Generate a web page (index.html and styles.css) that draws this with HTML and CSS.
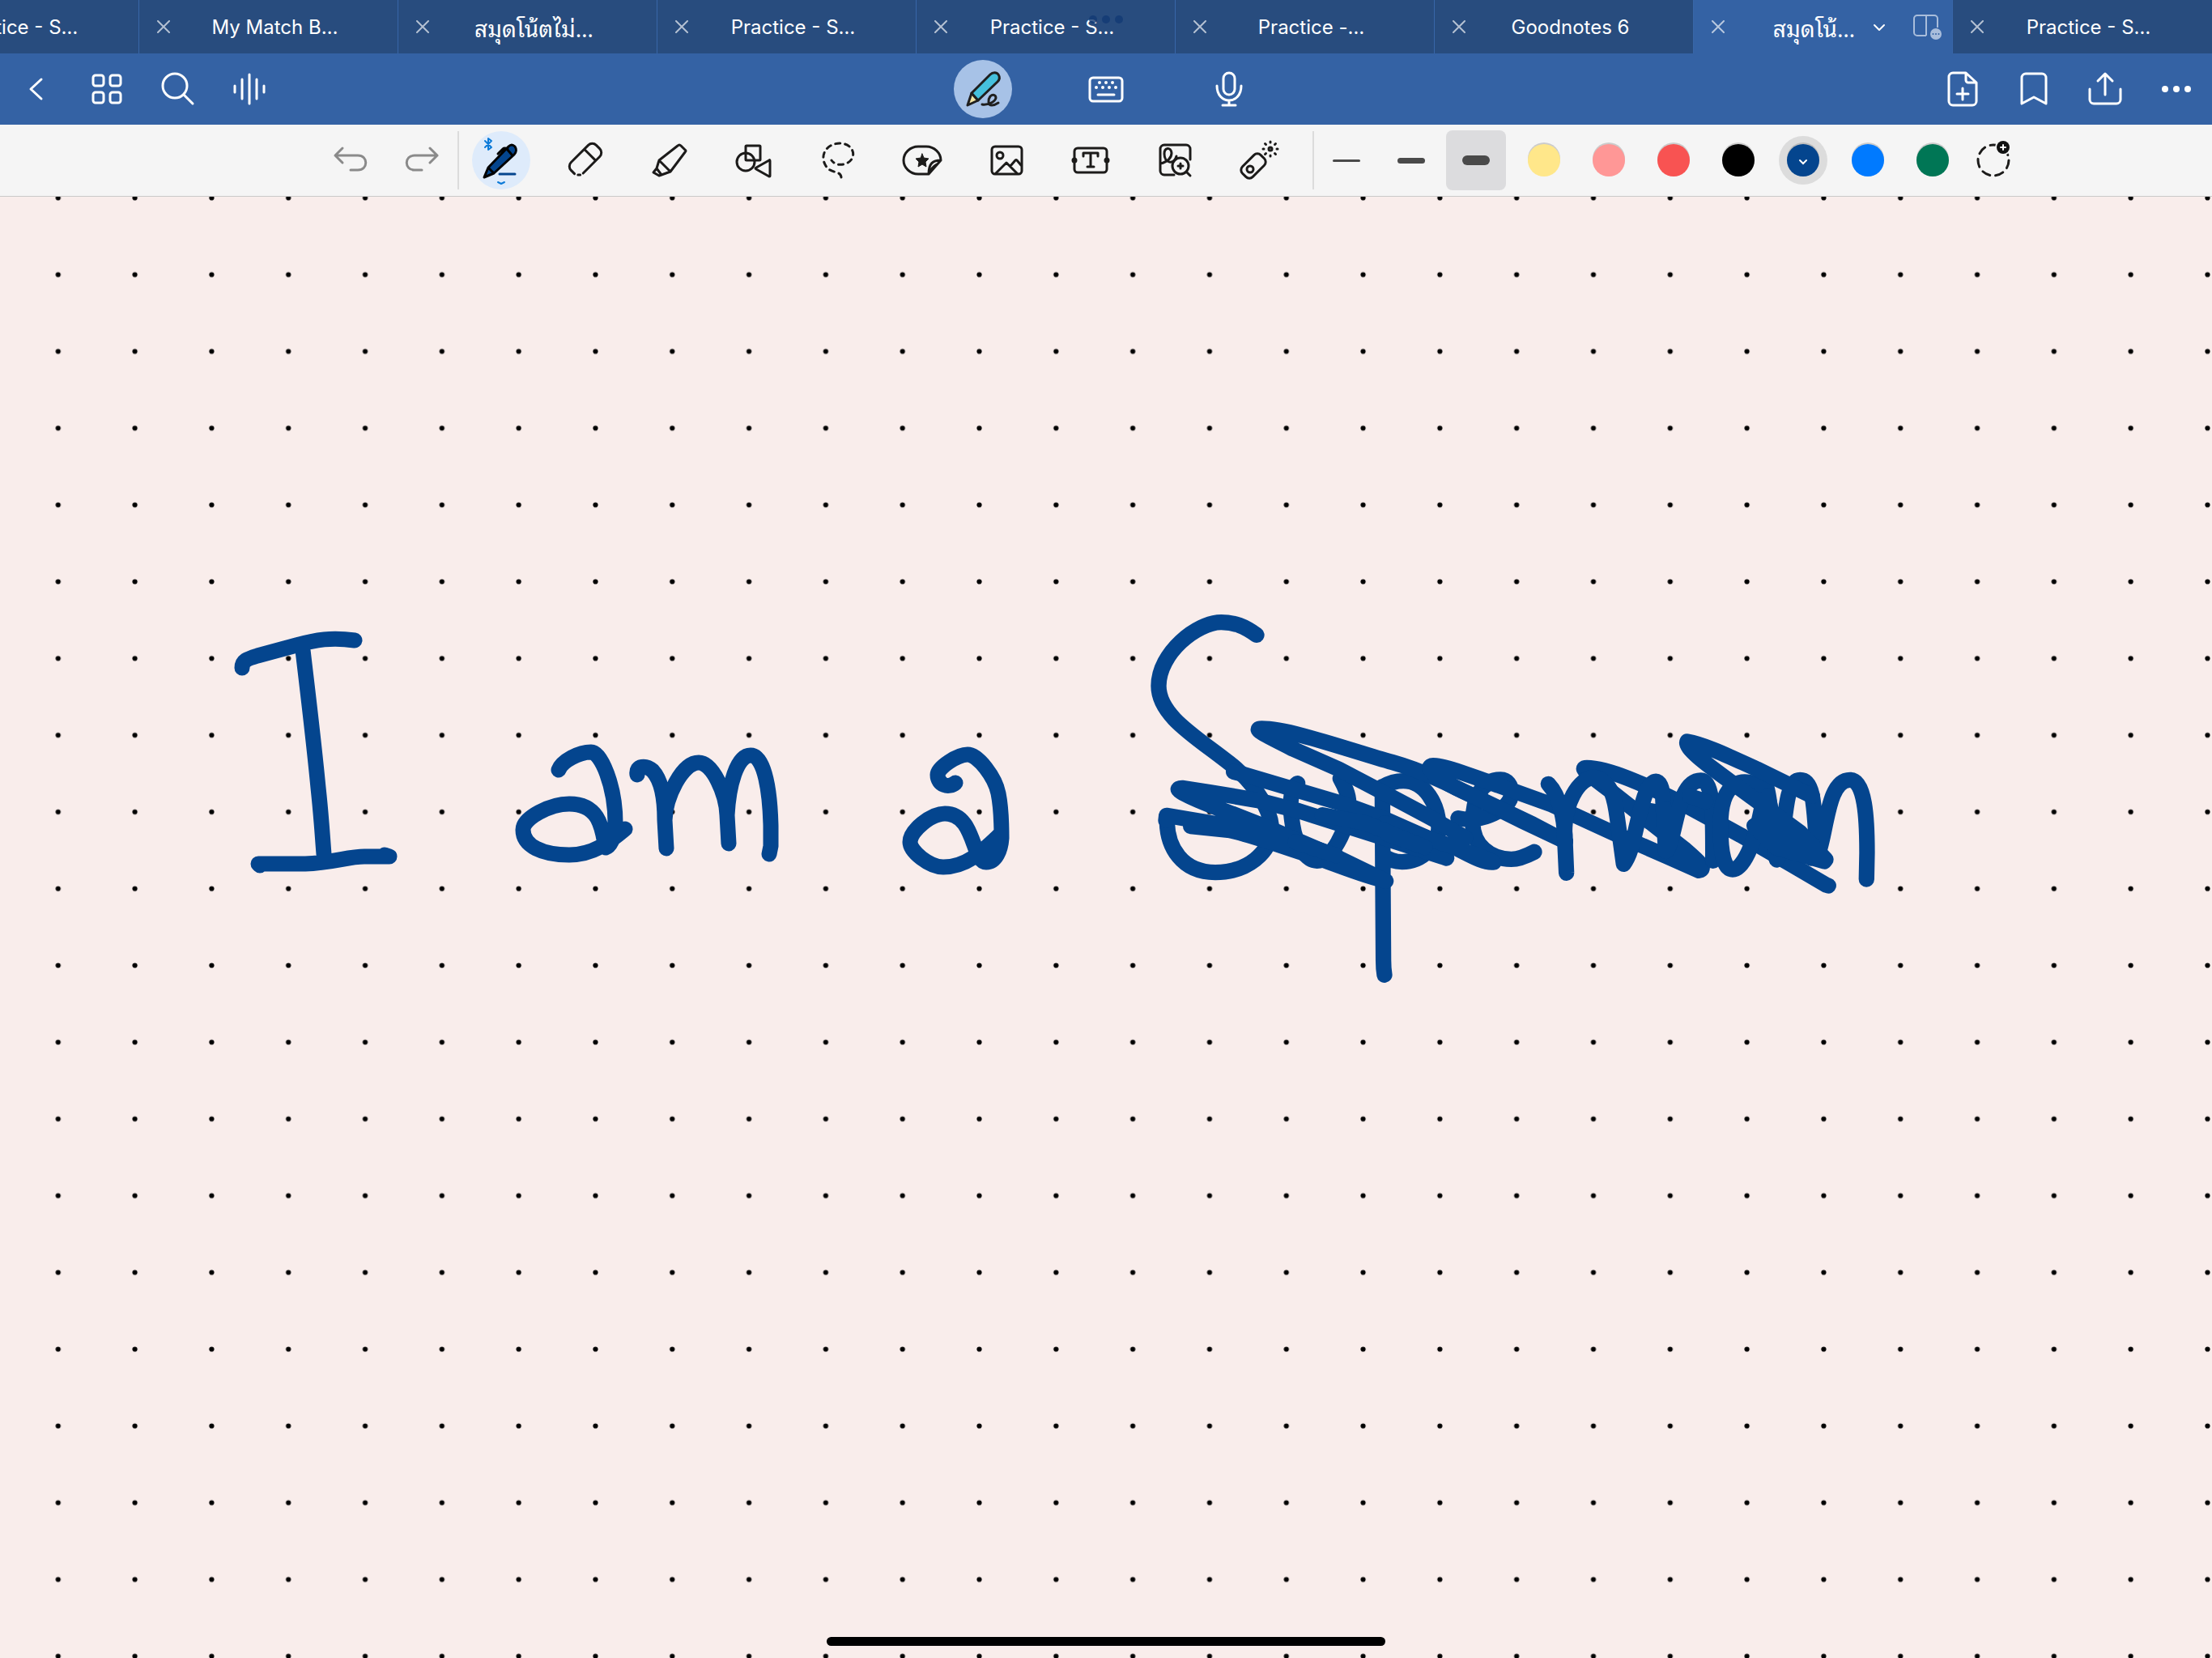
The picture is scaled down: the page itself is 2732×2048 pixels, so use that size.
FILE: index.html
```html
<!DOCTYPE html>
<html lang="en">
<head>
<meta charset="utf-8">
<meta name="viewport" content="width=device-width, initial-scale=1">
<title>Goodnotes</title>
<link rel="stylesheet" href="styles.css">
</head>
<body>
<svg class="defs" aria-hidden="true">
  <symbol id="close" viewBox="-10 -10 20 20"><path d="M-7 -7 7 7M7 -7-7 7"/></symbol>
</svg>

<nav class="tabs" aria-label="Open documents">
  <div class="tab"><button class="close" aria-label="Close"><svg><use href="#close"/></svg></button><button class="title">Practice - S…</button></div>
  <div class="tab"><button class="close" aria-label="Close"><svg><use href="#close"/></svg></button><button class="title">My Match B…</button></div>
  <div class="tab"><button class="close" aria-label="Close"><svg><use href="#close"/></svg></button><button class="title thai" lang="th">สมุดโน้ตไม่…</button></div>
  <div class="tab"><button class="close" aria-label="Close"><svg><use href="#close"/></svg></button><button class="title">Practice - S…</button></div>
  <div class="tab"><button class="close" aria-label="Close"><svg><use href="#close"/></svg></button><button class="title">Practice - S…</button></div>
  <div class="tab"><button class="close" aria-label="Close"><svg><use href="#close"/></svg></button><button class="title">Practice -…</button></div>
  <div class="tab"><button class="close" aria-label="Close"><svg><use href="#close"/></svg></button><button class="title">Goodnotes 6</button></div>
  <div class="tab active">
    <button class="close" aria-label="Close"><svg><use href="#close"/></svg></button>
    <button class="title thai" lang="th">สมุดโน้…</button>
    <button class="chevron" aria-label="Document menu"><svg viewBox="-10 -10 20 20"><path d="M-6 -2 0 4 6 -2"/></svg></button>
    <button class="split" aria-label="Split view"><svg viewBox="0 0 40 40"><path d="M20 31H9a4 4 0 0 1-4-4V10a4 4 0 0 1 4-4h21a4 4 0 0 1 4 4v11M20 6v25"/><circle class="badge" cx="32" cy="29" r="7"/><g class="badge-dots"><circle cx="28.500" cy="29" r="1"/><circle cx="32" cy="29" r="1"/><circle cx="35.500" cy="29" r="1"/></g></svg></button>
  </div>
  <div class="tab"><button class="close" aria-label="Close"><svg><use href="#close"/></svg></button><button class="title">Practice - S…</button></div>
  <div class="multitask" aria-hidden="true"><i></i><i></i><i></i></div>
</nav>

<header class="navbar">
  <div class="group">
    <button aria-label="Back"><svg class="icon" viewBox="-36 -36 72 72"><path d="M7 -12-6 0 7 12"/></svg></button>
    <button aria-label="Thumbnails"><svg class="icon" viewBox="-36 -36 72 72"><rect x="-17" y="-17" width="13" height="13" rx="3"/><rect x="4" y="-17" width="13" height="13" rx="3"/><rect x="-17" y="4" width="13" height="13" rx="3"/><rect x="4" y="4" width="13" height="13" rx="3"/></svg></button>
    <button aria-label="Search"><svg class="icon" viewBox="-36 -36 72 72"><circle cx="-4" cy="-4" r="15"/><path d="M7 7 18 18"/></svg></button>
    <button aria-label="Audio"><svg class="icon" viewBox="-36 -36 72 72"><path d="M-18 -4V4M-9 -12V12M0 -18V18M9 -12V12M18 -4V4"/></svg></button>
  </div>
  <div class="group modes">
    <button class="current" aria-label="Write"><svg class="icon ink-icon" viewBox="-36 -36 72 72"><path fill="#f3e5a4" d="M-14 5-19 20-6 14Z"/><path fill="#45c0dd" d="M-14 5 9 -18C12 -21 17 -21 19 -18C21 -15 21 -12 18 -9L-6 14Z"/><path d="M-1 19C6 20 15 16 16 11C16 7 12 6 9 9C6 13 6 20 11 20C14 20 16 19 19 17"/></svg></button>
    <button aria-label="Keyboard"><svg class="icon" viewBox="-36 -36 72 72"><rect x="-20" y="-14" width="40" height="29" rx="4"/><path d="M-10 7H10"/><path class="dots" d="M-8 -8h0M0 -8h0M8 -8h0M-12 -2h0M-4 -2h0M4 -2h0M12 -2h0"/></svg></button>
    <button aria-label="Record"><svg class="icon" viewBox="-36 -36 72 72"><rect x="-7" y="-20" width="14" height="27" rx="7"/><path d="M-15 -4C-15 20 15 20 15 -4M0 14V20M-8 20H8"/></svg></button>
  </div>
  <div class="group end">
    <button aria-label="Add page"><svg class="icon" viewBox="-36 -36 72 72"><path d="M4 -20H-12a5 5 0 0 0-5 5V15a5 5 0 0 0 5 5H12a5 5 0 0 0 5-5V-8ZM4 -20V-11a3 3 0 0 0 3 3H17M-7 6H7M0 -1V13"/></svg></button>
    <button aria-label="Bookmark"><svg class="icon" viewBox="-36 -36 72 72"><path d="M-15 18V-14a5 5 0 0 1 5-5H10a5 5 0 0 1 5 5V18L0 10Z"/></svg></button>
    <button aria-label="Share"><svg class="icon" viewBox="-36 -36 72 72"><path d="M-19 0V13a5 5 0 0 0 5 5H14a5 5 0 0 0 5-5V0M0 7V-18M-9 -10 0 -19 9 -10"/></svg></button>
    <button aria-label="More"><svg class="icon solid" viewBox="-36 -36 72 72"><circle cx="-14" r="4"/><circle r="4"/><circle cx="14" r="4"/></svg></button>
  </div>
</header>

<div class="toolbar" role="toolbar" aria-label="Tools">
  <div class="history">
    <button aria-label="Undo"><svg class="icon" viewBox="-36 -36 72 72"><path d="M-10 -15-19 -6-10 3M-19 -6H9C22 -6 22 12 9 12H0"/></svg></button>
    <button aria-label="Redo"><svg class="icon" viewBox="-36 -36 72 72"><path d="M10 -15 19 -6 10 3M19 -6H-9C-22 -6-22 12-9 12H0"/></svg></button>
  </div>
  <div class="tools">
    <button class="current" aria-label="Pen"><svg class="icon pen" viewBox="-36 -36 72 72"><path fill="#04458e" d="M-21 21-16 9 9 -17C12 -20 15 -19 17 -17C19 -14 19 -10 16 -7L-9 16ZM-16 9-9 16M7 -14 13 -7M-4 -8 2 -14C4 -16 6 -15 8 -14"/><path class="nib" d="M-2 17H17"/><path class="accent" d="M-4 27 0 29 4 27"/><path class="accent" d="M-20 -24-12 -16-16 -13V-27L-12 -24-20 -16"/></svg></button>
    <button aria-label="Eraser"><svg class="icon" viewBox="-36 -36 72 72"><g transform="translate(0 -1) rotate(-45)"><path d="M-14 10H15a7 7 0 0 0 7-7V-3a7 7 0 0 0-7-7H-15a7 7 0 0 0-7 7V3M8 -10V10M-20 7l2 2"/></g></svg></button>
    <button aria-label="Highlighter"><svg class="icon" viewBox="-36 -36 72 72"><path d="M-13 0 10 -18Q12 -20 14 -18L19 -13Q21 -12 19 -10L1 14ZM-13 0-16 10-10 18 1 14M-16 10-20 15-13 19-10 18"/></svg></button>
    <button aria-label="Shapes"><svg class="icon" viewBox="-36 -36 72 72"><rect x="-10" y="-18" width="18" height="18" rx="1"/><circle cx="-10" cy="2" r="11"/><path d="M19 0 3 9Q1 10 3 11L19 20Q20 20 20 19V1Q20 -1 19 0Z"/></svg></button>
    <button aria-label="Lasso"><svg class="icon" viewBox="-36 -36 72 72"><path stroke-dasharray="6 6" d="M4 21C3 12-9 17-15 7C-24 -8-12 -21 2 -21C14 -21 21 -12 18 -4C15 6-2 9-8 0"/></svg></button>
    <button aria-label="Stickers"><svg class="icon" viewBox="-36 -36 72 72"><path d="M8 17H-5C-15 17-23 9-23 0S-15 -17-5 -17H5C15 -17 23 -9 23 0ZM8 17C8 4 13 0 23 0M8 17Q11 9 18 5"/><path fill="#1c1b1a" stroke-width="1" d="M0 -8 2 -3 8 -2 4 2 5 8 0 5-5 8-4 2-8 -2-2 -3Z"/></svg></button>
    <button aria-label="Image"><svg class="icon" viewBox="-36 -36 72 72"><rect x="-18" y="-17" width="37" height="34" rx="4"/><circle cx="-8" cy="-6" r="4"/><path d="M-13 16 0 3 13 16M5 7 11 0Q12 -1 13 0L18 6"/></svg></button>
    <button aria-label="Text"><svg class="icon" viewBox="-36 -36 72 72"><rect x="-20" y="-15" width="40" height="30" rx="4"/><path d="M-9 -5V-9H9V-5M0 -9V8M-4 8H4"/><path class="knobs" d="M-20 0h0M20 0h0"/></svg></button>
    <button aria-label="Elements"><svg class="icon" viewBox="-36 -36 72 72"><path d="M-1 18H-13a5 5 0 0 1-5-5V-14a5 5 0 0 1 5-5H14a5 5 0 0 1 5 5V-1M-18 4C-8 2-4 -4-4 -9C-5 -17-13 -16-13 -8C-13 4-1 6 2 -5"/><circle cx="7" cy="7" r="10"/><path d="M14 14 19 19M7 4V10M4 7H10"/></svg></button>
    <button aria-label="Laser pointer"><svg class="icon" viewBox="-36 -36 72 72"><rect x="-16" y="-9" width="32" height="18" rx="6" transform="translate(-7 7) rotate(-45)"/><circle cx="-11" cy="11" r="4"/><circle cx="14" cy="-14" r="2"/><path d="M14 -22v-1M14 -6v1M6 -14h-1M22 -14h1M8.500 -19.500l-1 -1M19.500 -19.500l1 -1M8.500 -8.500l-1 1M19.500 -8.500l1 1"/></svg></button>
  </div>
  <fieldset class="widths" aria-label="Stroke width">
    <label><input type="radio" name="width" aria-label="Thin"><span class="bar thin"></span></label>
    <label><input type="radio" name="width" aria-label="Medium"><span class="bar medium"></span></label>
    <label><input type="radio" name="width" aria-label="Thick" checked><span class="bar thick"></span></label>
  </fieldset>
  <fieldset class="colors" aria-label="Colour">
    <label><input type="radio" name="color" class="yellow" aria-label="Yellow"></label>
    <label><input type="radio" name="color" class="pink" aria-label="Pink"></label>
    <label><input type="radio" name="color" class="red" aria-label="Red"></label>
    <label><input type="radio" name="color" class="black" aria-label="Black"></label>
    <label><input type="radio" name="color" class="navy" aria-label="Navy" checked><svg viewBox="-10 -10 20 20"><path d="M-4 0 0 4 4 0"/></svg></label>
    <label><input type="radio" name="color" class="blue" aria-label="Blue"></label>
    <label><input type="radio" name="color" class="green" aria-label="Green"></label>
  </fieldset>
  <button class="add" aria-label="Add colour"><svg class="icon" viewBox="-36 -36 72 72"><circle cx="-1" cy="0" r="19" stroke-dasharray="10 7"/><circle cx="11" cy="-16" r="10" class="gap"/><circle cx="11" cy="-16" r="8" class="dot"/><path class="plus" d="M11 -19V-13M8 -16H14"/></svg></button>
</div>

<main class="page">
  <svg class="paper" role="img" aria-label="Handwriting: I am a, followed by a scribbled-out word">
    <defs>
      <pattern id="dotgrid" x="24.400" y="-46" width="94.810" height="94.810" patternUnits="userSpaceOnUse"><circle cx="47.400" cy="47.400" r="3.100"/></pattern>
    </defs>
    <rect width="100%" height="100%" fill="url(#dotgrid)"/>
    <g class="ink" transform="translate(0 -243)">
      <path d="M299 825C299 816 305 814 318 810L366 797C390 790 410 787 438 791M374 803C382 870 388 920 393 973C397 1010 398 1030 400 1055M321 1069 319 1067H377C410 1066 430 1058 450 1058H481L475 1056"/>
      <path d="M690 951C694 940 715 929 730 929C742 929 760 970 760 1017C760 1030 755 1045 748 1047C744 1030 744 993 703 993C680 993 646 1010 646 1025C646 1045 670 1056 703 1056C735 1056 755 1038 772 1024L748 1035"/>
      <path d="M787 957C785 945 798 945 806 952C818 965 821 990 821 1013L823 1048L821 1013C822 985 842 942 863 942C880 942 897 980 898 1007L900 1042L898 1007C900 970 910 933 927 933C945 933 951 980 952 1020V1045L950 1055"/>
      <path d="M1180 967C1172 974 1158 970 1158 957C1158 948 1183 932 1195 932C1208 932 1229 960 1233 980C1237 1000 1237 1020 1237 1035C1236 1050 1230 1065 1218 1065C1200 1065 1205 1005 1167 1005C1150 1005 1124 1026 1124 1040C1124 1052 1148 1071 1165 1071C1195 1071 1215 1050 1236 1030L1220 1054"/>
      <g class="thirds" transform="translate(1400 740) scale(.3333)">
        <path d="M456 133C410 100 375 86 325 86C235 86 93 200 93 322C93 440 250 520 380 628C460 700 511 790 511 850C511 940 420 1013 303 1013C180 1013 124 920 124 820"/>
        <path d="M608 683C575 705 580 780 590 840C600 910 640 970 680 970C730 970 797 860 797 755C797 720 780 690 766 665"/>
        <path d="M922 695 924 1040 926 1340Q926 1370 930 1393M925 695C950 680 975 674 1000 674C1080 674 1131 760 1131 850C1131 910 1070 974 995 974C970 974 945 965 925 950"/>
        <path d="M1203 812C1290 830 1400 780 1400 720C1400 690 1385 669 1360 669C1290 669 1257 740 1257 830C1257 910 1320 964 1400 964C1430 964 1460 950 1485 937"/>
        <path d="M371 640 410 650 780 760 930 815 1100 890 1160 960 895 875 612 785 470 748C370 730 280 715 180 700C150 700 160 715 300 770L480 840 760 960 935 1045 480 880 300 832 122 802 120 820M212 842 350 856C420 868 560 920 640 945S860 1030 930 1042"/>
        <path d="M930 830 1290 955 1335 975C1300 980 1250 950 1190 920L1230 885 1110 815 960 735 760 630 590 555C480 500 440 480 475 480C580 480 800 560 960 605S1250 730 1440 822L1600 898"/>
        <path d="M1600 898 1480 835 1250 725C1100 660 1080 617 1110 617C1160 617 1260 660 1350 690L1550 762 1780 868 1980 955 2095 1006C2130 1000 2080 960 2040 925L1880 800 1760 705C1660 630 1660 625 1680 625C1760 625 1900 690 2020 750L2250 875 2440 985 2568 1060 2575 1062M1860 775 2000 800"/>
        <path d="M700 800 860 830 1080 920 940 870M600 900 750 950"/>
      </g>
      <g class="thirds" transform="translate(1860 860) scale(.3333)">
        <path d="M157 325C200 370 220 460 220 560L224 655 218 530C210 400 270 300 330 300C400 320 405 400 415 470L436 622C470 580 480 480 505 400C530 300 580 280 582 390L592 575C630 540 630 312 722 312C770 312 767 440 767 610"/>
        <path d="M960 345C880 290 795 310 795 480C795 590 810 642 840 642C880 642 920 540 940 450L965 335C985 400 980 500 1003 606C1040 560 1020 310 1090 310C1150 310 1140 450 1155 590C1190 500 1190 310 1275 310C1330 310 1338 450 1338 580L1336 678"/>
        <path d="M1135 370 930 270C830 225 740 180 672 168C660 190 740 250 830 315L940 395 1090 505 1185 605 1180 612 1000 560 920 480M680 370 740 390M960 450 1130 600M970 370 1000 500"/>
      </g>
    </g>
  </svg>
  <div class="home-indicator" aria-hidden="true"></div>
</main>
</body>
</html>
```

FILE: styles.css
```css
* { box-sizing: border-box; }

body {
  margin: 0;
  min-height: 100vh;
  display: flex;
  flex-direction: column;
  background: #f9edeb;
  font-family: Inter, "Noto Sans Thai", "Noto Sans", sans-serif;
}

button {
  display: grid;
  place-items: center;
  margin: 0;
  padding: 0;
  border: 0;
  background: none;
  color: inherit;
  font: inherit;
}

svg { display: block; }
.defs { width: 0; height: 0; position: absolute; }

/* Document tabs */
.tabs {
  position: relative;
  display: flex;
  justify-content: flex-end;
  height: 66px;
  padding-right: 1px;
  overflow: hidden;
  background: #284c7e;
  color: #fff;
  font-size: 24px;
}
.tab {
  flex: 0 0 320px;
  display: flex;
  align-items: center;
  padding-right: 44px;
  border-left: 1px solid #3866a8;
}
.tab.active { background: #3462a4; padding-right: 12px; }
.close { width: 60px; height: 66px; }
.close svg, .chevron svg {
  width: 20px;
  height: 20px;
  fill: none;
  stroke: #fff;
  stroke-width: 2;
  stroke-linecap: round;
  stroke-linejoin: round;
}
.close svg { opacity: .65; }
.title { flex: 1; height: 66px; white-space: nowrap; }
.thai { font-family: "Noto Sans Thai Looped", "Noto Sans Thai", Loma, "Noto Sans", sans-serif; font-size: 28px; }
.active .title { padding-left: 18px; }
.chevron { width: 20px; margin-right: 28px; }
.split svg { width: 40px; height: 40px; fill: none; stroke: #a9bddb; stroke-width: 2; }
.split .badge { fill: #a9bddb; stroke: none; }
.split .badge-dots { fill: #3462a4; stroke: none; }
.multitask {
  position: absolute;
  top: 19px;
  left: 50%;
  display: flex;
  gap: 6px;
  transform: translateX(-50%);
}
.multitask i { width: 10px; height: 10px; border-radius: 50%; background: #123a74; opacity: .8; }

/* Icons */
.icon {
  width: 72px;
  height: 72px;
  fill: none;
  stroke: currentColor;
  stroke-width: 3;
  stroke-linecap: round;
  stroke-linejoin: round;
}
.icon.solid { fill: currentColor; stroke: none; }
.icon .dots { stroke-width: 4; }
.icon .knobs { stroke-width: 7; }

/* Navigation bar */
.navbar {
  display: grid;
  grid-template-columns: 1fr auto 1fr;
  align-items: center;
  height: 88px;
  background: #3462a4;
  color: #fff;
}
.group { display: flex; }
.group button { width: 88px; height: 88px; }
.group.end { justify-content: flex-end; }
.group.modes { gap: 80px; }
.group.modes button { width: 72px; height: 72px; }
.group .current { border-radius: 50%; background: #a7c2e7; color: #1f1f1f; }

/* Toolbar */
.toolbar {
  display: flex;
  justify-content: center;
  align-items: center;
  height: 89px;
  padding-left: 152px;
  border-bottom: 1px solid #c9c9c9;
  background: #f5f5f5;
  color: #1c1b1a;
}
.history, .tools, .widths, .colors { display: flex; align-items: center; height: 72px; }
.history { border-right: 2px solid #dcdcdc; color: #8a8a8a; }
.history button { width: 88px; }
.tools { padding-right: 14px; border-right: 2px solid #dcdcdc; }
.tools button { width: 104px; }
.tools .current .icon { border-radius: 50%; background: #deebfb; }
.pen { color: #000; }
.pen .nib { stroke: #04458e; }
.pen .accent { stroke: #0b7ad8; stroke-width: 2; }

fieldset { margin: 0; padding: 0; border: 0; }
.widths label, .colors label { display: grid; place-items: center; width: 80px; height: 74px; }
input { appearance: none; margin: 0; }
.widths input, .widths .bar { grid-area: 1 / 1; }
.widths input { width: 74px; height: 74px; border-radius: 8px; }
.widths input:checked { background: #dcdcde; }
.bar { width: 34px; background: #4a4a4a; border-radius: 6px; }
.bar.thin { height: 3px; }
.bar.medium { height: 7px; }
.bar.thick { height: 12px; }

.colors { padding-left: 4px; }
.colors input, .colors svg { grid-area: 1 / 1; }
.colors input {
  width: 40px;
  height: 40px;
  border-radius: 50%;
  box-shadow: 0 -2px 0 #cccccc;
}
.colors input:checked { box-shadow: 0 -2px 0 #bcbcbc, 0 0 0 10px #dcdcdc; }
.colors svg { width: 20px; height: 20px; fill: none; stroke: #fff; stroke-width: 2; stroke-linecap: round; }
.yellow { background: #ffe78a; }
.pink { background: #ff9796; }
.red { background: #f85352; }
.black { background: #000; }
.navy { background: #04458e; }
.blue { background: #007aff; }
.green { background: #007655; }
.add { width: 68px; height: 72px; }
.add .gap { fill: #f5f5f5; stroke: none; }
.add .dot { fill: #111; stroke: none; }
.add .plus { stroke: #fff; stroke-width: 2; }

/* Page */
.page { position: relative; flex: 1; display: flex; }
.paper { flex: 1; width: 100%; }
.ink {
  fill: none;
  stroke: #04458e;
  stroke-width: 19;
  stroke-linecap: round;
  stroke-linejoin: round;
}
.thirds { stroke-width: 58; }
.home-indicator {
  position: absolute;
  bottom: 15px;
  left: 50%;
  width: 690px;
  height: 11px;
  border-radius: 6px;
  background: #000;
  transform: translateX(-50%);
}
```
